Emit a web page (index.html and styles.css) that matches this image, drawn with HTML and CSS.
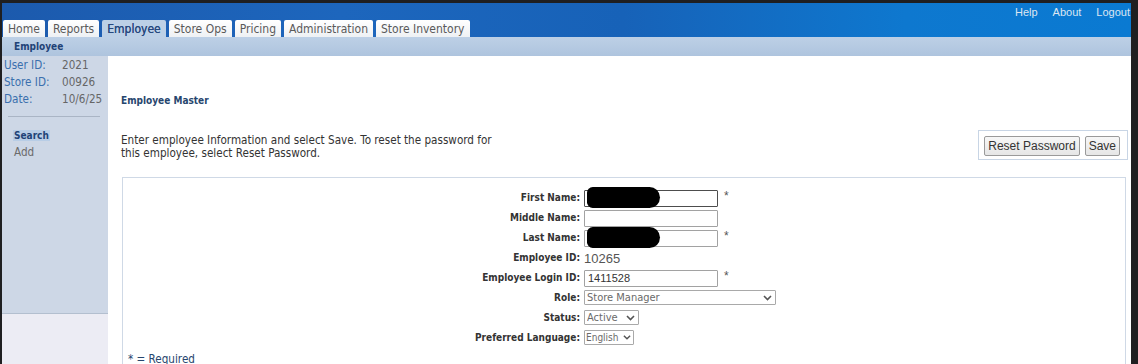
FILE: index.html
```html
<!DOCTYPE html>
<html lang="en">
<head>
  <meta charset="UTF-8">
  <title>Employee Master</title>
  <link rel="stylesheet" href="styles.css">
</head>
<body>

<div class="page">
  <div class="header">
    <div class="global-links">
      <a href="#">Help</a>
      <a href="#">About</a>
      <a href="#">Logout</a>
    </div>
    <div class="tabs">
      <a class="tab" href="#">Home</a>
      <a class="tab" href="#">Reports</a>
      <a class="tab active" href="#">Employee</a>
      <a class="tab" href="#">Store Ops</a>
      <a class="tab" href="#">Pricing</a>
      <a class="tab" href="#">Administration</a>
      <a class="tab" href="#">Store Inventory</a>
    </div>
  </div>

  <div class="subnav">Employee</div>

  <div class="body">
    <div class="sidebar">
      <div class="sidebar-top">
        <table class="info">
          <tr><td class="info-label">User ID:</td><td>2021</td></tr>
          <tr><td class="info-label">Store ID:</td><td>00926</td></tr>
          <tr><td class="info-label">Date:</td><td>10/6/25</td></tr>
        </table>
        <hr class="sep">
        <ul class="side-menu">
          <li><a class="selected" href="#">Search</a></li>
          <li><a href="#">Add</a></li>
        </ul>
      </div>
      <div class="sidebar-bottom"></div>
    </div>

    <div class="main">
      <h2 class="page-title">Employee Master</h2>

      <div class="intro-row">
        <p class="intro">Enter employee Information and select Save. To reset the password for<br>this employee, select Reset Password.</p>
        <div class="actions">
          <button>Reset Password</button>
          <button>Save</button>
        </div>
      </div>

      <div class="form-box">
        <div class="form-grid">
          <label>First Name:</label>
          <div class="field">
            <span class="masked"><input type="text" class="text-input focused"><span class="redact"></span></span>
            <span class="req">*</span>
          </div>

          <label>Middle Name:</label>
          <div class="field"><input type="text" class="text-input"></div>

          <label>Last Name:</label>
          <div class="field">
            <span class="masked"><input type="text" class="text-input"><span class="redact"></span></span>
            <span class="req">*</span>
          </div>

          <label>Employee ID:</label>
          <div class="field"><span class="value">10265</span></div>

          <label>Employee Login ID:</label>
          <div class="field">
            <input type="text" class="text-input" value="1411528">
            <span class="req">*</span>
          </div>

          <label class="short">Role:</label>
          <div class="field short">
            <select class="select role"><option>Store Manager</option></select>
          </div>

          <label class="short">Status:</label>
          <div class="field short">
            <select class="select status"><option>Active</option></select>
          </div>

          <label class="short">Preferred Language:</label>
          <div class="field short">
            <select class="select lang"><option>English</option></select>
          </div>
        </div>

        <div class="required-note">* = Required</div>
      </div>
    </div>
  </div>
</div>

</body>
</html>
```

FILE: styles.css
```css
html, body {
  margin: 0;
  height: 100%;
}
body {
  background: #1f1f21;
  font-family: "DejaVu Sans Condensed", "Liberation Sans", sans-serif;
  font-size: 11.6px;
  color: #333;
  overflow: hidden;
}
a {
  text-decoration: none;
}
.page {
  margin: 3px 7px 0 2px;
  height: calc(100% - 3px);
  background: #fff;
  display: flex;
  flex-direction: column;
}

/* header */
.header {
  height: 34px;
  background: linear-gradient(90deg, #1c5aad 0%, #1d66bd 30%, #1762b8 55%, #0e78cf 80%, #0a7ad2 100%);
  display: flex;
  flex-direction: column;
  justify-content: space-between;
}
.global-links {
  display: flex;
  justify-content: flex-end;
  gap: 15px;
  padding: 3px 1px 0 0;
  font-family: "Liberation Sans", sans-serif;
  font-size: 11px;
}
.global-links a {
  color: #dce6f2;
}
.tabs {
  display: flex;
  gap: 3px;
  padding-left: 1px;
  height: 17px;
}
.tab {
  display: block;
  padding: 0 5px;
  font-size: 12px;
  line-height: 19px;
  background: linear-gradient(#ffffff, #eef1f4);
  color: #5a5a5a;
  border-radius: 2px 2px 0 0;
  white-space: nowrap;
}
.tab.active {
  background: #bcd0e6;
  color: #27497d;
  text-shadow: 0 0 0.4px #27497d;
}
.subnav {
  height: 19px;
  line-height: 19px;
  padding-left: 12px;
  background: linear-gradient(#bdd0e6, #aec4de);
  color: #1f4377;
  font-size: 10px;
  font-weight: bold;
}

/* sidebar */
.body {
  flex: 1;
  display: flex;
  min-height: 0;
}
.sidebar {
  width: 106px;
  display: flex;
  flex-direction: column;
  flex-shrink: 0;
}
.sidebar-top {
  height: 257px;
  background: #cdd7e6;
  border-bottom: 1px solid #b3bfcf;
}
.sidebar-bottom {
  flex: 1;
  background: #ececf4;
}
.info {
  border-collapse: collapse;
  margin: 0 0 0 2px;
}
.info td {
  padding: 0;
  height: 17px;
  color: #666;
}
.info td.info-label {
  width: 58px;
  color: #3a6fad;
}
.sep {
  border: 0;
  border-top: 1px solid #aab5c5;
  margin: 9px 8px 0 6px;
}
.side-menu {
  list-style: none;
  margin: 10px 0 0;
  padding: 0 0 0 11px;
}
.side-menu li {
  height: 17px;
  line-height: 17px;
}
.side-menu a {
  color: #6b6b6b;
  padding: 0 1px;
}
.side-menu a.selected {
  color: #1f4377;
  font-size: 10px;
  font-weight: bold;
  background: #b8cde6;
}

/* main */
.main {
  flex: 1;
  padding: 0 3px 0 13px;
  min-width: 0;
}
.page-title {
  margin: 38px 0 0;
  font-size: 10px;
  line-height: 13px;
  color: #27466e;
}
.intro-row {
  display: flex;
  justify-content: space-between;
  align-items: flex-start;
  margin-top: 23px;
}
.intro {
  margin: 4px 0 0;
  line-height: 13px;
  color: #333;
}
.actions {
  display: flex;
  gap: 5px;
  padding: 5px 7px 3px 5px;
  border: 1px solid #c8d5e5;
}
.actions button {
  height: 20px;
  padding: 0 3px;
  font-family: "Liberation Sans", sans-serif;
  font-size: 12px;
  color: #333;
  background: linear-gradient(#f7f7f7, #e6e6e6);
  border: 1px solid #9a9a9a;
  border-radius: 2px;
}

/* form */
.form-box {
  margin: 17px 2px 0 1px;
  border: 1px solid #cfd9e6;
  padding-top: 10px;
  height: 300px;
}
.form-grid {
  display: grid;
  grid-template-columns: 457px 1fr;
  column-gap: 4px;
  grid-auto-rows: 20px;
}
.form-grid label {
  text-align: right;
  font-size: 10px;
  font-weight: bold;
  line-height: 20px;
  color: #333;
}
.form-grid .short {
  height: 19px;
  line-height: 19px;
}
.field {
  display: flex;
  align-items: center;
}
.text-input {
  box-sizing: border-box;
  width: 134px;
  height: 17px;
  margin: 0;
  padding: 1px 3px;
  border: 1px solid #a2a2a2;
  border-radius: 1px;
  font-family: "Liberation Sans", sans-serif;
  font-size: 11px;
  color: #333;
}
.text-input.focused {
  border-color: #4d4d4d;
}
.masked {
  position: relative;
  display: inline-block;
  height: 17px;
}
.redact {
  position: absolute;
  left: 3px;
  top: -3px;
  width: 73px;
  height: 21px;
  background: #000;
  border-radius: 6px 11px 11px 6px;
}
.req {
  align-self: flex-start;
  margin: 1px 0 0 6px;
  color: #555;
  font-size: 12px;
  font-family: "Liberation Sans", sans-serif;
}
.value {
  font-family: "Liberation Sans", sans-serif;
  font-size: 13px;
  color: #555;
}
.select {
  box-sizing: border-box;
  height: 15px;
  margin: 0;
  padding: 0 0 0 2px;
  border: 1px solid #a9a9a9;
  border-radius: 1px;
  appearance: none;
  -webkit-appearance: none;
  background: #fff url("data:image/svg+xml,%3Csvg xmlns='http://www.w3.org/2000/svg' width='9' height='6'%3E%3Cpath d='M1 1l3.5 3.5L8 1' fill='none' stroke='%23555' stroke-width='1.6'/%3E%3C/svg%3E") no-repeat right 3px center;
  font-family: "DejaVu Sans Condensed", "Liberation Sans", sans-serif;
  font-size: 11px;
  line-height: 13px;
  color: #6a6a6a;
}
.select.role {
  width: 192px;
}
.select.status {
  width: 55px;
}
.select.lang {
  width: 50px;
  padding-left: 1px;
  font-size: 10px;
  background-position: right 2px center;
  background-size: 8px 5px;
}
.required-note {
  margin: 4px 0 0 5px;
  color: #27466e;
}
```
